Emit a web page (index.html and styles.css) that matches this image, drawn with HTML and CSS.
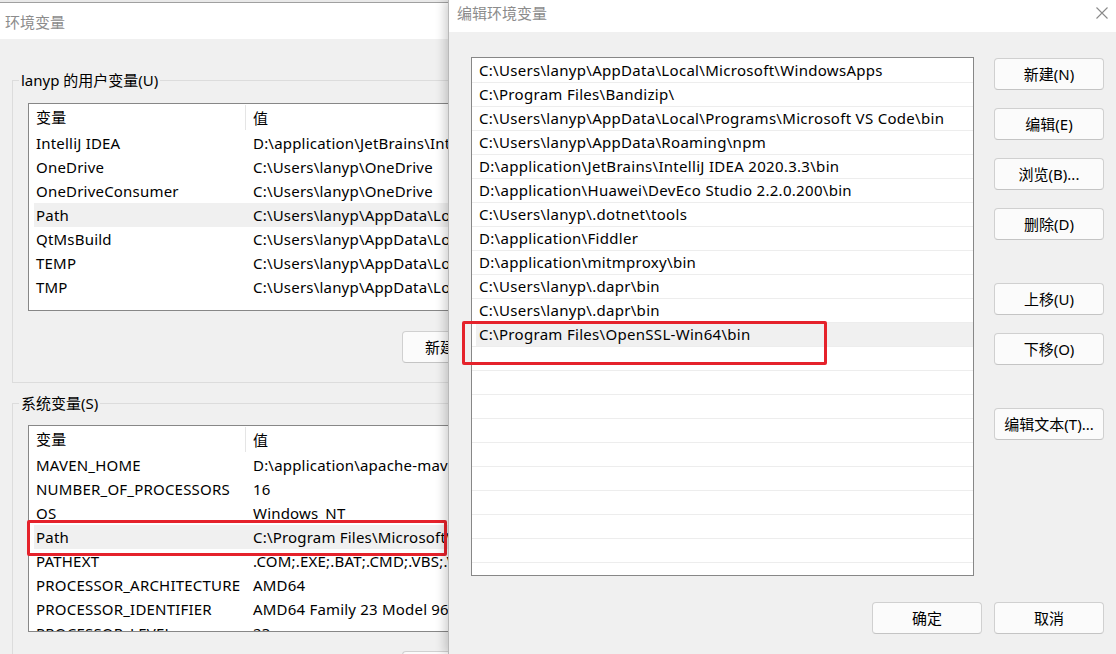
FILE: index.html
```html
<!DOCTYPE html>
<html>
<head lang="zh-CN">
    <meta charset="UTF-8">
    <title>编辑环境变量</title>
    <link rel="stylesheet" href="styles.css">
</head>
<body>
<div class="desk">
    <!-- 后面的“环境变量”窗口 -->
    <section class="envWin">
        <div class="winTitle">环境变量</div>
        <fieldset class="group">
            <legend>lanyp 的用户变量(U)</legend>
            <div class="groupIn">
                <div class="varList">
                    <div class="varRow head">
                        <span class="name">变量</span>
                        <span class="value">值</span>
                    </div>
                    <div class="rows userRows">
                        <div class="varRow"><span class="name">IntelliJ IDEA</span><span class="value">D:\application\JetBrains\IntelliJ IDEA 2020.3.3\bin;</span></div>
                        <div class="varRow"><span class="name">OneDrive</span><span class="value">C:\Users\lanyp\OneDrive</span></div>
                        <div class="varRow"><span class="name">OneDriveConsumer</span><span class="value">C:\Users\lanyp\OneDrive</span></div>
                        <div class="varRow sel"><span class="name">Path</span><span class="value">C:\Users\lanyp\AppData\Local\Microsoft\WindowsApps;</span></div>
                        <div class="varRow"><span class="name">QtMsBuild</span><span class="value">C:\Users\lanyp\AppData\Local\QtMsBuild</span></div>
                        <div class="varRow"><span class="name">TEMP</span><span class="value">C:\Users\lanyp\AppData\Local\Temp</span></div>
                        <div class="varRow"><span class="name">TMP</span><span class="value">C:\Users\lanyp\AppData\Local\Temp</span></div>
                    </div>
                </div>
                <div class="groupBtns">
                    <button class="btn btnLeft">新建(N)...</button>
                </div>
            </div>
        </fieldset>
        <fieldset class="group sysGroup">
            <legend>系统变量(S)</legend>
            <div class="groupIn">
                <div class="varList">
                    <div class="varRow head">
                        <span class="name">变量</span>
                        <span class="value">值</span>
                    </div>
                    <div class="rows sysRows">
                        <div class="varRow"><span class="name">MAVEN_HOME</span><span class="value">D:\application\apache-maven-3.6.3</span></div>
                        <div class="varRow"><span class="name">NUMBER_OF_PROCESSORS</span><span class="value">16</span></div>
                        <div class="varRow"><span class="name">OS</span><span class="value">Windows_NT</span></div>
                        <div class="varRow sel"><span class="name">Path</span><span class="value">C:\Program Files\Microsoft\jdk-11</span><span class="mark markSys"></span></div>
                        <div class="varRow"><span class="name">PATHEXT</span><span class="value">.COM;.EXE;.BAT;.CMD;.VBS;.VBE;.JS</span></div>
                        <div class="varRow"><span class="name">PROCESSOR_ARCHITECTURE</span><span class="value">AMD64</span></div>
                        <div class="varRow"><span class="name">PROCESSOR_IDENTIFIER</span><span class="value">AMD64 Family 23 Model 96</span></div>
                        <div class="varRow"><span class="name">PROCESSOR_LEVEL</span><span class="value">23</span></div>
                    </div>
                </div>
                <div class="groupBtns">
                    <button class="btn btnLeft">新建(W)...</button>
                </div>
            </div>
        </fieldset>
    </section>

    <!-- 前面的“编辑环境变量”对话框 -->
    <section class="dialog">
        <div class="dlgTitle">
            <span>编辑环境变量</span>
            <svg class="close" width="12" height="12" viewBox="0 0 12 12">
                <path d="M0.5 0.5 L11.5 11.5 M11.5 0.5 L0.5 11.5" stroke="#8a8a8a" stroke-width="1.1" fill="none"/>
            </svg>
        </div>
        <div class="dlgBody">
            <div class="pathList">
                <div class="pathRow">C:\Users\lanyp\AppData\Local\Microsoft\WindowsApps</div>
                <div class="pathRow">C:\Program Files\Bandizip\</div>
                <div class="pathRow">C:\Users\lanyp\AppData\Local\Programs\Microsoft VS Code\bin</div>
                <div class="pathRow">C:\Users\lanyp\AppData\Roaming\npm</div>
                <div class="pathRow">D:\application\JetBrains\IntelliJ IDEA 2020.3.3\bin</div>
                <div class="pathRow">D:\application\Huawei\DevEco Studio 2.2.0.200\bin</div>
                <div class="pathRow">C:\Users\lanyp\.dotnet\tools</div>
                <div class="pathRow">D:\application\Fiddler</div>
                <div class="pathRow">D:\application\mitmproxy\bin</div>
                <div class="pathRow">C:\Users\lanyp\.dapr\bin</div>
                <div class="pathRow">C:\Users\lanyp\.dapr\bin</div>
                <div class="pathRow sel">C:\Program Files\OpenSSL-Win64\bin<span class="mark markPath"></span></div>
                <div class="pathRow"></div>
                <div class="pathRow"></div>
                <div class="pathRow"></div>
                <div class="pathRow"></div>
                <div class="pathRow"></div>
                <div class="pathRow"></div>
                <div class="pathRow"></div>
                <div class="pathRow"></div>
                <div class="pathRow"></div>
            </div>
            <div class="sideBtns">
                <button class="btn">新建(N)</button>
                <button class="btn">编辑(E)</button>
                <button class="btn">浏览(B)...</button>
                <button class="btn">删除(D)</button>
                <button class="btn gapTop">上移(U)</button>
                <button class="btn">下移(O)</button>
                <button class="btn gapTop">编辑文本(T)...</button>
            </div>
        </div>
        <div class="dlgFoot">
            <button class="btn">确定</button>
            <button class="btn">取消</button>
        </div>
    </section>
</div>
</body>
</html>
```

FILE: styles.css
```css
*{
    padding: 0;
    margin: 0;
    box-sizing: border-box;
}
body{
    background-color: #e9e9e9;
    font: 15px/20px "Noto Sans", "Noto Sans CJK SC", sans-serif;
    color: #000;
    overflow: hidden;
}
.desk{
    display: flex;
    width: 1116px;
    height: 654px;
    overflow: hidden;
}

/* 环境变量 窗口 */
.envWin{
    flex: none;
    width: 448px;
    height: 652px;
    margin-top: 2px;
    border-top: 1px solid #a0a0a0;
    background-color: #f0f0f0;
    overflow: hidden;
}
.winTitle{
    height: 36px;
    padding: 9px 0 0 5px;
    background-color: #fff;
    color: #8c8c8c;
}
.group{
    width: 560px;
    min-width: 0;
    margin: 31px 0 0 12px;
    border: 1px solid #dcdcdc;
    padding: 0;
}
.group legend{
    margin-left: 6px;
    padding: 0 2px;
    line-height: 20px;
}
.sysGroup{
    margin-top: 10px;
}
.groupIn{
    padding: 13px 0 19px 15px;
}
.sysGroup .groupIn{
    padding-top: 12px;
    padding-bottom: 0;
}
.varList{
    width: 520px;
    background-color: #fff;
    border: 1px solid #878787;
}
.varRow{
    position: relative;
    display: grid;
    grid-template-columns: 212px 1fr;
    height: 24px;
    margin-left: 5px;
    align-items: center;
    white-space: nowrap;
    letter-spacing: 0.2px;
}
.varRow .name{
    padding-left: 2px;
}
.varRow .value{
    padding-left: 7px;
}
.varRow.head{
    height: 27px;
}
.varRow.head .name{
    border-right: 1px solid #e5e5e5;
    line-height: 25px;
}
.varRow.sel{
    background-color: #f0f0f0;
}
.userRows{
    height: 179px;
}
.sysRows{
    height: 178px;
    clip-path: inset(0 -20px 0 -20px);
}
.groupBtns{
    display: flex;
    padding-left: 374px;
    margin-top: 20px;
}
.sysGroup .groupBtns{
    margin-top: 19px;
}

/* 红框标记 */
.mark{
    position: absolute;
    border: 3px solid #e5222b;
    border-radius: 2px;
}
.markSys{
    left: -7px;
    top: -5px;
    width: 420px;
    height: 36px;
}
.markPath{
    left: -10px;
    top: -2px;
    width: 365px;
    height: 44px;
}

/* 按钮 */
.btn{
    flex: none;
    width: 110px;
    height: 32px;
    border: 1px solid #d0d0d0;
    border-bottom-color: #c4c4c4;
    border-radius: 4px;
    background-color: #fbfbfb;
    font: inherit;
    color: #000;
    text-align: center;
}
.btnLeft{
    text-align: left;
    padding-left: 22px;
}

/* 编辑环境变量 对话框 */
.dialog{
    flex: none;
    width: 668px;
    display: flex;
    flex-direction: column;
    background-color: #f0f0f0;
    border-left: 1px solid #b8b8b8;
    box-shadow: -3px 0 10px rgba(0, 0, 0, 0.2);
    z-index: 1;
}
.dlgTitle{
    display: flex;
    justify-content: space-between;
    height: 32px;
    padding: 3px 8px 0 8px;
    background-color: #fff;
    color: #8c8c8c;
}
.close{
    margin-top: 4px;
}
.dlgBody{
    display: flex;
    gap: 20px;
    padding: 25px 12px 0 22px;
}
.pathList{
    width: 503px;
    height: 519px;
    padding-top: 1px;
    border: 1px solid #878787;
    background-color: #fff;
}
.pathRow{
    position: relative;
    height: 24px;
    padding-left: 7px;
    border-bottom: 1px solid #ededed;
    line-height: 23px;
    white-space: nowrap;
    letter-spacing: 0.3px;
}
.pathRow.sel{
    background-color: #f0f0f0;
    box-shadow: inset 4px 0 #fff;
}
.sideBtns{
    display: flex;
    flex-direction: column;
    gap: 18px;
    padding-top: 1px;
}
.sideBtns .gapTop{
    margin-top: 25px;
}
.dlgFoot{
    display: flex;
    justify-content: flex-end;
    gap: 12px;
    padding: 26px 12px 0 0;
}
```
